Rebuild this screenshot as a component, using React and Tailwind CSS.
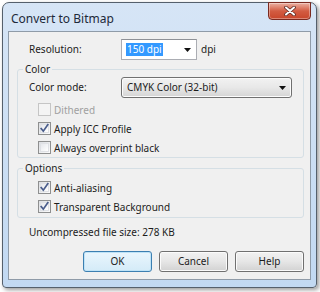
const font = { fontFamily: '"Noto Sans", "Open Sans", sans-serif' };

function CheckBox({ label, checked, disabled }) {
  return (
    <div className="h-[19px] flex items-center pl-[20px]">
      <div
        className={
          'w-[13px] h-[13px] border flex items-center justify-center ' +
          (disabled
            ? 'border-[#c5c5c5] bg-[#f4f4f4]'
            : 'border-[#8e8f8f] bg-gradient-to-br from-[#dcdee2] to-[#fbfbfb]')
        }
      >
        <div
          className={
            'w-[9px] h-[9px] flex items-center justify-center ' +
            (disabled ? 'bg-[#f4f4f4]' : 'bg-gradient-to-br from-[#e6e8ec] to-[#ffffff] border border-[#dfe1e5]')
          }
        >
          {checked && (
            <svg width="9" height="9" viewBox="0 0 9 9" className="overflow-visible">
              <path d="M1.2 4.6 L3.3 7.2 L7.8 0.8" fill="none" stroke="#4a5d8c" strokeWidth="1.7" strokeLinecap="square" />
            </svg>
          )}
        </div>
      </div>
      <span className={'ml-[3px] leading-[14px] ' + (disabled ? 'text-[#a0a0a0]' : 'text-[#1c1c1c]')}>
        {label}
      </span>
    </div>
  );
}

function Button({ children, primary }) {
  return (
    <div
      className={
        'w-[69px] h-[21px] rounded-[3px] border flex items-center justify-center text-[#1c1c1c] ' +
        (primary
          ? 'border-[#3c7fb1] bg-gradient-to-b from-[#eaf6fd] to-[#d4ebf8] shadow-[inset_0_0_0_1px_#bfe3f7]'
          : 'border-[#707070] bg-gradient-to-b from-[#f2f2f2] via-[#e6e6e6] to-[#d2d2d2] shadow-[inset_0_0_0_1px_#fbfbfb]')
      }
    >
      {children}
    </div>
  );
}

export default function App() {
  return (
    <div className="w-[320px] h-[292px] bg-white pl-[2px] pt-[2px] overflow-hidden" style={font}>
      <div className="w-[315px] h-[286px] rounded-t-[7px] rounded-b-[4px] border border-[#55606c] bg-gradient-to-b from-[#d6e5f6] to-[#c2d9f2] flex flex-col px-[5px] pb-[7px] shadow-[2px_2px_4px_rgba(0,0,0,0.4)]">
        <div className="h-[28px] flex items-start justify-between">
          <span className="pl-[3px] pt-[8px] text-[12px] leading-[15px] text-[#1e2a3a]">Convert to Bitmap</span>
          <div className="-mt-[1px] w-[43px] h-[18px] rounded-b-[4px] border border-[#7a2a20] bg-gradient-to-b from-[#eab0a2] via-[#d35c42] to-[#c8452a] shadow-[inset_0_0_0_1px_rgba(255,255,255,0.35)] flex items-center justify-center">
            <svg width="12" height="10" viewBox="0 0 12 10">
              <path d="M2 1.5 L10 8.5 M10 1.5 L2 8.5" stroke="#5a2b25" strokeWidth="3.6" strokeLinecap="round" />
              <path d="M2 1.5 L10 8.5 M10 1.5 L2 8.5" stroke="#ffffff" strokeWidth="2" strokeLinecap="round" />
            </svg>
          </div>
        </div>

        <div className="flex-1 border border-[#8f9ba8] bg-[#f0f0f0] flex flex-col text-[#1c1c1c] text-[10px]">
          <div className="mt-[7px] flex items-center pl-[20px] h-[21px]">
            <span className="w-[92px]">Resolution:</span>
            <div className="w-[76px] h-[21px] border border-[#abadb3] border-t-[#8e9196] bg-white flex items-center pl-[4px] pr-[5px]">
              <span className="bg-[#3399ff] text-white leading-[13px] px-[1px]">150 dpi</span>
              <svg className="ml-auto" width="7" height="4" viewBox="0 0 7 4">
                <path d="M0 0 H7 L3.5 4 Z" fill="#111" />
              </svg>
            </div>
            <span className="ml-[4px]">dpi</span>
          </div>

          <fieldset className="mt-[2px] ml-[8px] mr-[6px] border border-[#d5dfe5] rounded-[3px] pb-[0px]">
            <legend className="ml-[5px] px-[2px] leading-[14px]">Color</legend>
            <div className="mt-[1px] flex items-center pl-[11px] h-[21px]">
              <span className="w-[92px]">Color mode:</span>
              <div className="w-[171px] h-[21px] rounded-[3px] border border-[#707070] bg-gradient-to-b from-[#f2f2f2] via-[#e8e8e8] to-[#d4d4d4] shadow-[inset_0_0_0_1px_#fcfcfc] flex items-center pl-[5px] pr-[5px]">
                <span>CMYK Color (32-bit)</span>
                <svg className="ml-auto" width="7" height="4" viewBox="0 0 7 4">
                  <path d="M0 0 H7 L3.5 4 Z" fill="#111" />
                </svg>
              </div>
            </div>
            <div className="mt-[2px]">
              <CheckBox label="Dithered" disabled />
              <CheckBox label="Apply ICC Profile" checked />
              <CheckBox label="Always overprint black" />
            </div>
          </fieldset>

          <fieldset className="mt-[3px] ml-[8px] mr-[6px] border border-[#d5dfe5] rounded-[3px] pb-[1px]">
            <legend className="ml-[5px] px-[2px] leading-[14px]">Options</legend>
            <div className="mt-[3px]">
              <CheckBox label="Anti-aliasing" checked />
              <CheckBox label="Transparent Background" checked />
            </div>
          </fieldset>

          <div className="mt-[7px] pl-[20px] leading-[14px]">Uncompressed file size: 278 KB</div>

          <div className="mt-[12px] mr-[6px] flex justify-end gap-[7px]">
            <Button primary>OK</Button>
            <Button>Cancel</Button>
            <Button>Help</Button>
          </div>
        </div>
      </div>
    </div>
  );
}
